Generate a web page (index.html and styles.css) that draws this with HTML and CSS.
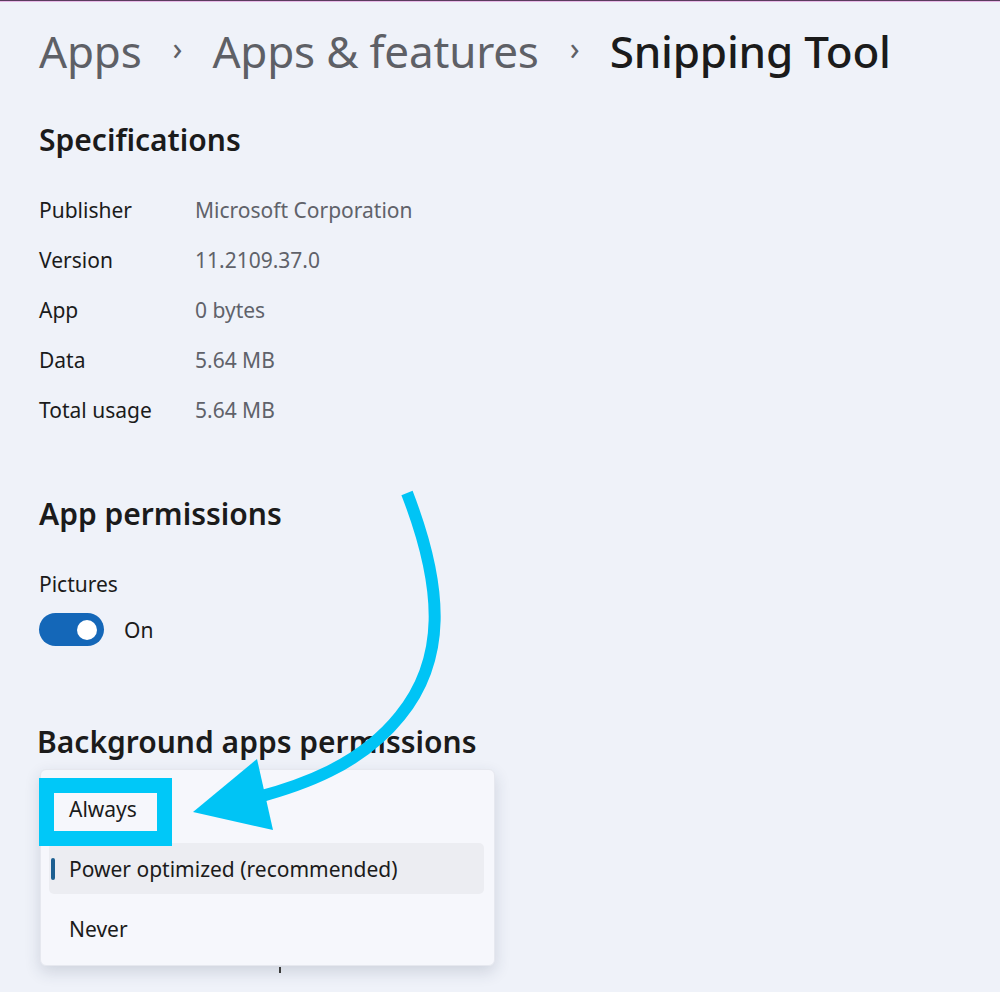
FILE: index.html
```html
<!DOCTYPE html>
<html lang="en">
<head>
<meta charset="utf-8">
<title>Snipping Tool - Apps &amp; features</title>
<link rel="stylesheet" href="styles.css">
</head>
<body>
<div class="page">
  <nav class="crumbs">
    <span class="crumb">Apps</span>
    <span class="sep">›</span>
    <span class="crumb">Apps &amp; features</span>
    <span class="sep">›</span>
    <span class="crumb current">Snipping Tool</span>
  </nav>

  <section class="specs">
    <h2 class="heading">Specifications</h2>
    <dl class="spec-list">
      <div class="spec-row"><dt>Publisher</dt><dd>Microsoft Corporation</dd></div>
      <div class="spec-row"><dt>Version</dt><dd>11.2109.37.0</dd></div>
      <div class="spec-row"><dt>App</dt><dd>0 bytes</dd></div>
      <div class="spec-row"><dt>Data</dt><dd>5.64 MB</dd></div>
      <div class="spec-row"><dt>Total usage</dt><dd>5.64 MB</dd></div>
    </dl>
  </section>

  <section class="perms">
    <h2 class="heading">App permissions</h2>
    <div class="perm-label">Pictures</div>
    <div class="toggle-row">
      <span class="toggle"><span class="knob"></span></span>
      <span class="toggle-text">On</span>
    </div>
  </section>

  <section class="bg-perms">
    <h2 class="heading">Background apps permissions</h2>
    <div class="menu">
      <div class="menu-item">Always</div>
      <div class="menu-item selected"><span class="indicator"></span>Power optimized (recommended)</div>
      <div class="menu-item">Never</div>
    </div>
    <div class="tick"></div>
  </section>

  <div class="callout-box"></div>
  <svg class="arrow" width="1000" height="992" viewBox="0 0 1000 992" xmlns="http://www.w3.org/2000/svg">
    <path d="M407 492 C 445 590, 445 660, 400 715 C 360 765, 300 785, 255 797" fill="none" stroke="#00c4f5" stroke-width="12"/>
    <polygon points="193,811 257,758 273,829" fill="#00c4f5"/>
  </svg>
</div>
</body>
</html>
```

FILE: styles.css
```css
* { box-sizing: border-box; }
html, body { margin: 0; padding: 0; }
body {
  background: #eff2f9;
  font-family: "Noto Sans", "Open Sans", sans-serif;
  color: #1b1b1b;
  width: 1000px;
  height: 992px;
  overflow: hidden;
}
.page {
  position: relative;
  height: 992px;
  border-top: 1px solid #5a3c5e;
  box-shadow: inset 0 1px 0 #e8b9e8;
  padding: 21px 0 0 39px;
}
.crumbs {
  display: flex;
  align-items: center;
  font-size: 44px;
  line-height: 58px;
  color: #5e6066;
}
.crumb { letter-spacing: -0.2px; }
.sep { font-size: 32px; margin: 0 30px 0 31px; color: #5e6066; position: relative; top: -3px; }
.current { color: #1b1b1b; font-weight: 500; }

.heading {
  margin: 0;
  font-size: 30px;
  font-weight: 600;
  line-height: 40px;
  color: #1b1b1b;
}
.specs { margin-top: 40px; }
.spec-list { margin: 25px 0 0 0; }
.spec-row {
  display: grid;
  grid-template-columns: 156px auto;
  height: 50px;
  align-items: center;
  font-size: 21px;
}
.spec-row dt { margin: 0; color: #1b1b1b; }
.spec-row dd { margin: 0; color: #60626a; }

.perms { margin-top: 59px; }
.perm-label { margin-top: 35px; font-size: 21px; color: #1b1b1b; line-height: 30px; }
.toggle-row {
  display: flex;
  align-items: center;
  gap: 20px;
  margin-top: 14px;
}
.toggle {
  width: 65px;
  height: 33px;
  border-radius: 17px;
  background: #1467b8;
  display: flex;
  align-items: center;
  justify-content: flex-end;
  padding-right: 7px;
}
.knob { width: 20px; height: 20px; border-radius: 50%; background: #fff; }
.toggle-text { font-size: 21px; color: #1b1b1b; }

.bg-perms { margin-top: 76px; margin-left: -2px; }
.menu {
  margin-top: 7px;
  margin-left: 3px;
  width: 455px;
  background: #f6f7fc;
  border: 1px solid #e6e8ef;
  border-radius: 6px;
  box-shadow: 0 6px 16px rgba(40, 50, 80, 0.16);
  padding: 13px 10px 11px 8px;
  display: flex;
  flex-direction: column;
  gap: 9px;
}
.menu-item {
  position: relative;
  height: 51px;
  display: flex;
  align-items: center;
  padding-left: 20px;
  font-size: 21px;
  color: #1b1b1b;
  border-radius: 5px;
}
.menu-item.selected { background: #ecedf2; }
.indicator {
  position: absolute;
  left: 2px;
  top: 15px;
  width: 4px;
  height: 22px;
  border-radius: 2px;
  background: #1d5f91;
}
.tick { width: 2px; height: 6px; background: #3a3a3a; margin: 1px 0 0 242px; }

.callout-box {
  position: absolute;
  left: 39px;
  top: 777px;
  width: 133px;
  height: 68px;
  border: 15px solid #00c8f8;
}
.arrow {
  position: absolute;
  left: 0;
  top: 0;
  pointer-events: none;
}
```
